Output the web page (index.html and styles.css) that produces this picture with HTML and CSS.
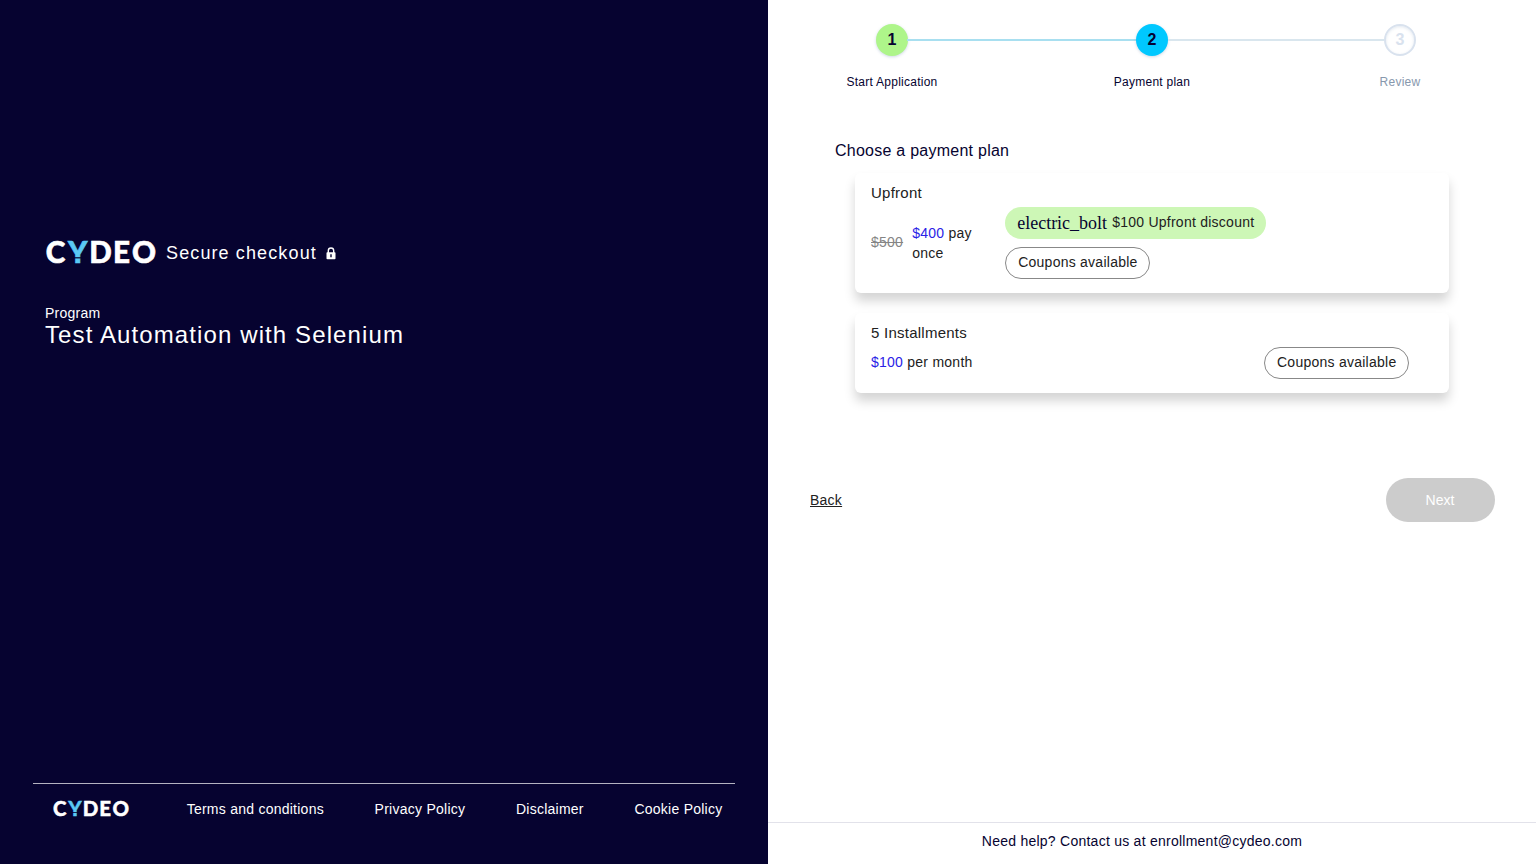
FILE: index.html
```
<!DOCTYPE html>
<html lang="en">
<head>
<meta charset="utf-8">
<title>Cydeo - Secure checkout</title>
<link rel="stylesheet" href="styles.css">
</head>
<body>
<div class="page">
  <aside class="brand">
    <div class="brand-main">
      <div class="secure">
        <svg class="logo" width="110" height="24" viewBox="0 0 110 24">
          <text class="logo-text" y="22.7"><tspan x="-.2">C</tspan><tspan class="logo-y" x="21.9">Y</tspan><tspan x="43.2">D</tspan><tspan x="67">E</tspan><tspan x="86">O</tspan></text>
          <rect class="logo-cut" x="27" y="17.2" width="10" height="1.2"/>
        </svg>
        <span class="secure-text">Secure checkout</span>
        <svg class="lock" width="10" height="13" viewBox="0 0 10 13"><path d="M2.3 6V3.7a2.7 2.7 0 0 1 5.4 0V6" fill="none" stroke="#fff" stroke-width="1.4"/><rect x=".5" y="5.3" width="9" height="7" rx=".8" fill="#fff"/><path d="M5 7.2v3" stroke="#060330" stroke-width="1.4"/></svg>
      </div>
      <div class="program-label">Program</div>
      <div class="program-name">Test Automation with Selenium</div>
    </div>
    <footer class="links">
      <svg class="logo-small" width="76" height="17" viewBox="0 0 110 24">
        <text class="logo-text" y="22.7"><tspan x="-.2">C</tspan><tspan class="logo-y" x="21.9">Y</tspan><tspan x="43.2">D</tspan><tspan x="67">E</tspan><tspan x="86">O</tspan></text>
        <rect class="logo-cut" x="27" y="17.2" width="10" height="1.2"/>
      </svg>
      <a>Terms and conditions</a>
      <a>Privacy Policy</a>
      <a>Disclaimer</a>
      <a>Cookie Policy</a>
    </footer>
  </aside>
  <main class="checkout">
    <ol class="stepper">
      <li class="step"><span class="dot done">1</span><span class="step-name">Start Application</span></li>
      <li class="line line-done"></li>
      <li class="step"><span class="dot active">2</span><span class="step-name">Payment plan</span></li>
      <li class="line line-next"></li>
      <li class="step"><span class="dot pending">3</span><span class="step-name muted">Review</span></li>
    </ol>
    <h1 class="heading">Choose a payment plan</h1>
    <section class="plans">
      <div class="card upfront">
        <div class="plan-name">Upfront</div>
        <div class="row">
          <s class="old">$500</s>
          <div class="price"><span class="amount">$400</span> pay once</div>
          <div class="chips">
            <span class="chip discount"><span class="bolt">electric_bolt</span><span>$100 Upfront discount</span></span>
            <span class="chip outline">Coupons available</span>
          </div>
        </div>
      </div>
      <div class="card monthly">
        <div class="plan-name">5 Installments</div>
        <div class="row spread">
          <div class="per"><span class="amount">$100</span> per month</div>
          <span class="chip outline">Coupons available</span>
        </div>
      </div>
    </section>
    <div class="actions">
      <a class="back">Back</a>
      <button class="next" disabled>Next</button>
    </div>
    <footer class="help">Need help? Contact us at enrollment@cydeo.com</footer>
  </main>
</div>
</body>
</html>
```
FILE: styles.css
```
* { box-sizing: border-box; }
body {
  margin: 0;
  font: 14px/20px "Liberation Sans", Arial, sans-serif;
  letter-spacing: .25px;
  color: #060330;
}
.page { display: grid; grid-template-columns: 1fr 1fr; height: 864px; }

.brand { display: flex; flex-direction: column; justify-content: space-between; background: #060330; color: #fff; }
.brand-main { padding: 240px 46px 0; }
.secure { display: flex; height: 24px; align-items: center; }
.logo, .logo-small { flex: none; overflow: visible; }
.logo-text { font: 900 29.6px Lato, sans-serif; letter-spacing: 0; fill: #fff; stroke: #fff; stroke-width: .6px; }
.logo-y { fill: #5ac8f5; stroke: #5ac8f5; }
.logo-cut { fill: #060330; }
.secure-text { margin: 2px 0 0 10px; font-size: 18px; letter-spacing: 1.12px; }
.lock { margin: 3px 0 0 9px; }
.program-label { margin: 39px 0 0 -1px; }
.program-name { margin-left: -1px; font-size: 24px; line-height: 24px; letter-spacing: 1.11px; white-space: nowrap; }
.links { display: flex; justify-content: space-between; align-items: center; margin: 0 33px 29px; height: 52px; padding: 0 12.5px 2px 20px; border-top: 1px solid #b4b3c1; }
.logo-small { margin: 0 7px 0 0; }

.checkout { display: flex; flex-direction: column; background: #fff; }
.stepper { display: flex; align-items: flex-start; margin: 24px 0 0; padding: 0 116px 0 77px; list-style: none; }
.step { display: flex; flex-direction: column; align-items: center; gap: 16px; flex: none; width: 94px; }
.step:last-child { width: 40px; }
.dot { display: flex; align-items: center; justify-content: center; width: 32px; height: 32px; border-radius: 50%; font-size: 16px; font-weight: 700; letter-spacing: 0; box-shadow: 0 1px 3px rgba(60, 100, 150, .25); }
.done { background: #aef58a; }
.active { background: #00c8ff; }
.pending { border: 2px solid #d9e2ee; color: #d9e2ee; box-shadow: inset 0 1px 3px rgba(60, 100, 150, .15); }
.step-name { font-size: 12px; white-space: nowrap; }
.muted { color: #8798ad; }
.line { height: 2px; margin-top: 15px; }
.line-done { flex: none; width: 230px; margin-left: -32px; margin-right: -32px; background: #a8dff0; }
.line-next { flex: 1; margin-left: -31px; margin-right: -4px; background: #d9e6ee; }
.heading { margin: 48px 0 0 67px; font-size: 16px; line-height: 22px; font-weight: 400; }
.plans { display: flex; flex-direction: column; gap: 20px; width: 594px; margin: 11px 0 0 87px; }
.card { padding: 10px 16px; border-radius: 6px; background: #fff; box-shadow: 0 8px 11px rgba(0, 0, 0, .17); color: #212121; }
.upfront { height: 120px; }
.monthly { height: 80px; }
.plan-name { font-size: 15px; line-height: 20px; }
.row { display: flex; margin-top: 4px; }
.old { margin-top: 25px; color: #858585; }
.price { width: 64px; margin: 16px 0 0 9px; }
.amount { color: #2a22e6; }
.chips { display: flex; flex-direction: column; align-items: flex-start; gap: 8px; margin-left: 29px; }
.chip { display: flex; align-items: center; height: 32px; padding: 0 12px 2px; border-radius: 16px; white-space: nowrap; }
.discount { background: #cdf7b6; gap: 5px; }
.bolt { font: 18px/20px "Liberation Serif", serif; letter-spacing: 0; color: #060330; padding-top: 1px; }
.outline { width: 145px; padding: 0 0 2px 12px; border: 1px solid #888; }
.spread { justify-content: space-between; padding-right: 24px; }
.per { margin-top: 5px; }
.actions { display: flex; justify-content: space-between; align-items: center; margin: 85px 41.5px 0 42px; }
.back { color: #212121; text-decoration: underline; }
.next { width: 109px; height: 44px; border: 0; border-radius: 22px; background: #ccc; color: #fff; font: 500 14px "Liberation Sans", Arial, sans-serif; }
.help { margin-top: auto; height: 42px; padding: 8px 20px 0 0; border-top: 1px solid #e2e2ea; text-align: center; }
```
